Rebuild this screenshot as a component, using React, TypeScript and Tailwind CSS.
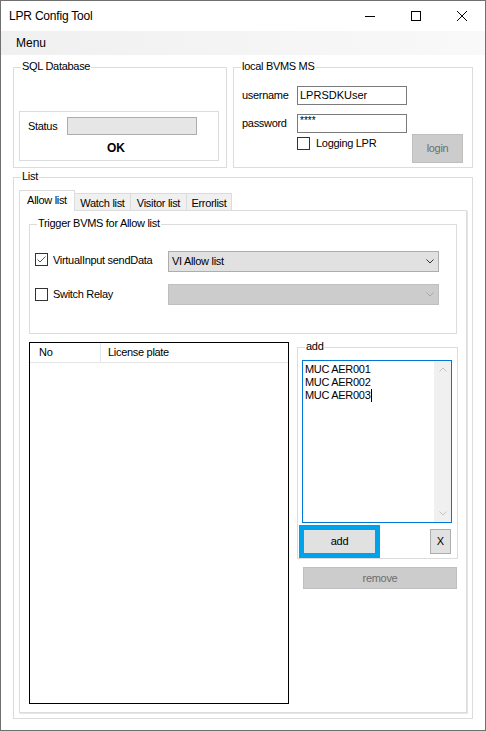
import type { ReactNode } from "react";

const ui = "font-['Liberation_Sans',Arial,sans-serif] text-[11px] leading-[13px] tracking-[-0.3px] text-black";

function GroupBox({ label, className = "", children }: { label: string; className?: string; children?: ReactNode }) {
  return (
    <div className={`relative shrink-0 border border-[#dcdcdc] ${className}`}>
      <span className="absolute -top-[8px] left-[7px] bg-white px-px leading-[13px]">{label}</span>
      {children}
    </div>
  );
}

function CheckBox({ checked }: { checked?: boolean }) {
  return (
    <span className="flex h-[13px] w-[13px] shrink-0 items-center justify-center border border-[#333] bg-white">
      {checked && (
        <svg width="11" height="11" viewBox="0 0 11 11">
          <path d="M1.5 5.5 L4 8 L9.5 2.5" fill="none" stroke="#555" strokeWidth="1" />
        </svg>
      )}
    </span>
  );
}

function Chevron({ color, up }: { color: string; up?: boolean }) {
  return (
    <svg width="8" height="5" viewBox="0 0 8 5">
      <path d={up ? "M0.5 4.5 L4 1 L7.5 4.5" : "M0.5 0.5 L4 4 L7.5 0.5"} fill="none" stroke={color} strokeWidth="1" />
    </svg>
  );
}

function Combo({ text, disabled }: { text?: string; disabled?: boolean }) {
  return (
    <span
      className={`flex h-[21px] w-[271px] shrink-0 items-center border pl-[3px] pr-[4px] ${
        disabled ? "border-[#bfbfbf] bg-[#cccccc]" : "border-[#adadad] bg-[#e1e1e1]"
      }`}
    >
      <span className="flex-1">{text}</span>
      <Chevron color={disabled ? "#a8a8a8" : "#333"} />
    </span>
  );
}

function Tab({ label, width, active }: { label: string; width: string; active?: boolean }) {
  if (active) {
    return (
      <span className={`relative z-10 flex h-[21px] ${width} justify-center border border-b-0 border-[#dcdcdc] bg-white pt-[3px]`}>
        {label}
      </span>
    );
  }
  return (
    <span className={`-ml-px flex h-[18px] ${width} justify-center border border-[#dcdcdc] bg-[#f0f0f0] pt-[3px]`}>
      {label}
    </span>
  );
}

export default function App() {
  return (
    <div className={`flex h-[731px] w-[486px] flex-col border border-[#707070] bg-white ${ui}`}>
      {/* title bar */}
      <div className="flex h-[30px] shrink-0 items-center">
        <span className="pl-2 text-[12px] tracking-[-0.2px]">LPR Config Tool</span>
        <div className="ml-auto flex h-full">
          <span className="flex w-[46px] items-center justify-center">
            <svg width="10" height="10" viewBox="0 0 10 10">
              <path d="M0 5.5 H10" stroke="#000" strokeWidth="1" />
            </svg>
          </span>
          <span className="flex w-[46px] items-center justify-center">
            <svg width="10" height="10" viewBox="0 0 10 10">
              <rect x="0.5" y="0.5" width="9" height="9" fill="none" stroke="#000" strokeWidth="1" />
            </svg>
          </span>
          <span className="flex w-[46px] items-center justify-center">
            <svg width="10" height="10" viewBox="0 0 10 10">
              <path d="M0 0 L10 10 M10 0 L0 10" stroke="#000" strokeWidth="1" />
            </svg>
          </span>
        </div>
      </div>

      {/* menu */}
      <div className="flex h-[24px] shrink-0 items-center bg-linear-to-r from-[#f0f0f0] to-[#f9f9f9] pl-[15px] text-[12px] tracking-normal">
        Menu
      </div>

      <div className="flex-1 px-[12px] pt-[12px]">
        <div className="flex gap-[6px]">
          <GroupBox label="SQL Database" className="h-[101px] w-[214px]">
            <div className="ml-[5px] mt-[43px] h-[50px] w-[200px] border border-[#dcdcdc]">
              <div className="flex items-center pl-[8px] pt-[5px]">
                <span className="w-[39px]">Status</span>
                <span className="h-[18px] w-[130px] border border-[#adadad] bg-[#e6e6e6]" />
              </div>
              <div className="ml-[87px] mt-[6px] text-[12px] font-bold leading-[14px] tracking-normal">OK</div>
            </div>
          </GroupBox>

          <GroupBox label="local BVMS MS" className="h-[101px] w-[240px]">
            <div className="pl-[8px] pt-[18px]">
              <div className="flex h-[19px] items-center">
                <span className="w-[55px]">username</span>
                <span className="flex h-[19px] w-[110px] items-center border border-[#7a7a7a] pl-[2px] tracking-normal">
                  LPRSDKUser
                </span>
              </div>
              <div className="mt-[9px] flex h-[19px] items-center">
                <span className="w-[55px]">password</span>
                <span className="h-[19px] w-[110px] border border-[#7a7a7a] pl-[2px] pt-px text-[10px] leading-[10px] tracking-normal">
                  ****
                </span>
              </div>
              <div className="mt-px flex items-start">
                <span className="ml-[55px] mt-[3px]">
                  <CheckBox />
                </span>
                <span className="ml-[6px] mt-[3px]">Logging LPR</span>
                <span className="ml-auto mr-[9px] flex h-[29px] w-[51px] items-center justify-center border border-[#bfbfbf] bg-[#cccccc] text-[#6d6d6d]">
                  login
                </span>
              </div>
            </div>
          </GroupBox>
        </div>

        <GroupBox label="List" className="mt-[9px] h-[542px] w-[460px]">
          <div className="ml-[5px] mt-[12px]">
            <div className="flex items-end">
              <Tab label="Allow list" width="w-[56px]" active />
              <Tab label="Watch list" width="w-[57px]" />
              <Tab label="Visitor list" width="w-[57px]" />
              <Tab label="Errorlist" width="w-[46px]" />
            </div>
            <div className="-mt-px h-[503px] w-[448px] border border-[#dcdcdc] shadow-[1px_1px_0_#e6e6e6]">
              <div className="pl-[9px] pt-[13px]">
                <GroupBox label="Trigger BVMS for Allow list" className="h-[110px] w-[428px]">
                  <div className="pl-[5px] pt-[26px]">
                    <div className="flex h-[21px] items-start">
                      <span className="mt-[2px]">
                        <CheckBox checked />
                      </span>
                      <span className="ml-[5px] mt-[3px] w-[115px] shrink-0">VirtualInput sendData</span>
                      <Combo text="VI Allow list" />
                    </div>
                    <div className="mt-[12px] flex h-[21px] items-start">
                      <span className="mt-[4px]">
                        <CheckBox />
                      </span>
                      <span className="ml-[5px] mt-[4px] w-[115px] shrink-0">Switch Relay</span>
                      <Combo disabled />
                    </div>
                  </div>
                </GroupBox>

                <div className="mt-[8px] flex items-start">
                  <div className="h-[362px] w-[260px] shrink-0 border border-black bg-white">
                    <div className="flex h-[20px] border-b border-[#e5e5e5]">
                      <span className="flex w-[71px] items-center border-r border-[#e5e5e5] pl-[9px]">No</span>
                      <span className="flex items-center pl-[7px]">License plate</span>
                    </div>
                  </div>

                  <div className="ml-[8px] mt-[5px]">
                    <GroupBox label="add" className="h-[212px] w-[161px]">
                      <div className="ml-[4px] mt-[12px] flex h-[163px] w-[150px] border border-[#0078d7] bg-white">
                        <div className="flex-1 pl-[2px] pt-[2px] tracking-[-0.3px]">
                          <div>MUC AER001</div>
                          <div>MUC AER002</div>
                          <div className="flex items-center">
                            MUC AER003
                            <span className="ml-px inline-block h-[13px] w-px bg-black" />
                          </div>
                        </div>
                        <div className="flex w-[17px] flex-col justify-between bg-[#f0f0f0]">
                          <span className="flex h-[17px] items-center justify-center">
                            <Chevron color="#c2c2c2" up />
                          </span>
                          <span className="flex h-[17px] items-center justify-center">
                            <Chevron color="#c2c2c2" />
                          </span>
                        </div>
                      </div>
                      <div className="ml-px mt-[2px] flex items-start">
                        <span className="border-[5px] border-[#00a3e9]">
                          <span className="flex h-[23px] w-[71px] items-center justify-center bg-[#e1e1e1]">add</span>
                        </span>
                        <span className="ml-auto mr-[6px] mt-[4px] flex h-[25px] w-[21px] items-center justify-center border border-[#adadad] bg-[#e1e1e1] tracking-normal">
                          X
                        </span>
                      </div>
                    </GroupBox>
                    <div className="ml-[6px] mt-[8px] flex h-[22px] w-[154px] items-center justify-center border border-[#bfbfbf] bg-[#cccccc] text-[#6d6d6d]">
                      remove
                    </div>
                  </div>
                </div>
              </div>
            </div>
          </div>
        </GroupBox>
      </div>
    </div>
  );
}
